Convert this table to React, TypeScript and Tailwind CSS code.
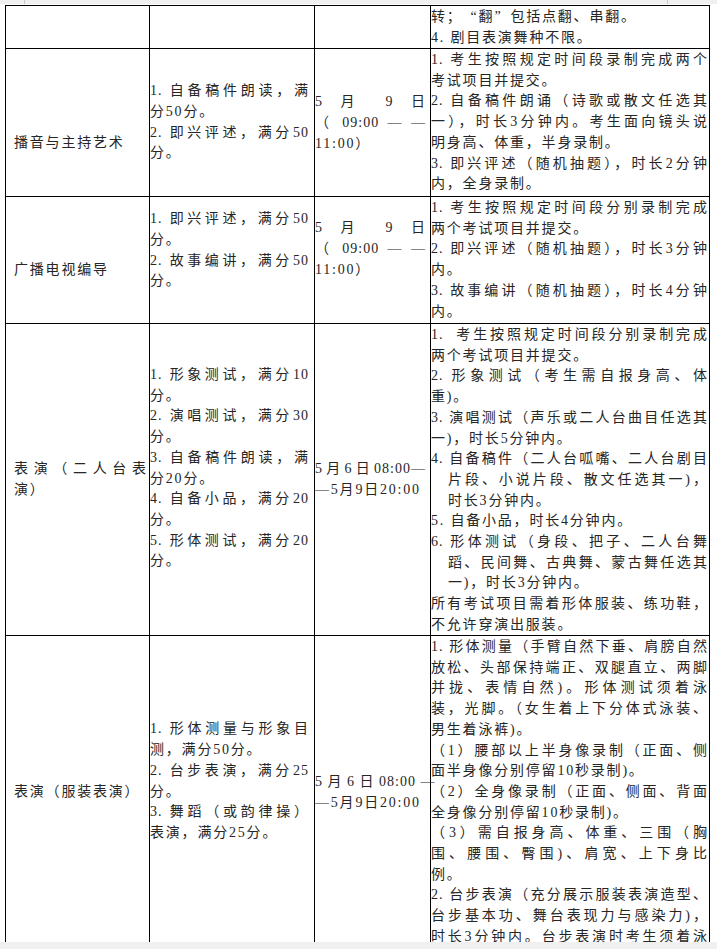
import React from "react";

type Ln = { t: React.ReactNode; j?: boolean; i?: boolean };

const j = (t: React.ReactNode): Ln => ({ t, j: true });
const l = (t: React.ReactNode): Ln => ({ t });
const ji = (t: React.ReactNode): Ln => ({ t, j: true, i: true });
const li = (t: React.ReactNode): Ln => ({ t, i: true });

function Lines({ ls }: { ls: Ln[] }) {
  return (
    <>
      {ls.map((x, k) => (
        <div
          key={k}
          className={
            x.j
              ? x.i
                ? "whitespace-nowrap text-justify [text-align-last:justify] pl-[17px]"
                : "whitespace-nowrap text-justify [text-align-last:justify]"
              : x.i
              ? "whitespace-nowrap pl-[17px] tracking-[1.8px]"
              : "whitespace-nowrap tracking-[1.8px]"
          }
        >
          {x.t}
        </div>
      ))}
    </>
  );
}

function Row({
  h,
  c1,
  c2,
  c3,
  c4,
  p1 = "",
  p2 = "",
  p3 = "",
}: {
  h: string;
  c1: Ln[];
  c2: Ln[];
  c3: Ln[];
  c4: Ln[];
  p1?: string;
  p2?: string;
  p3?: string;
}) {
  return (
    <div className={"flex border-b border-black overflow-hidden " + h}>
      <div className={"w-[144px] shrink-0 border-r border-black pl-[8px] pr-[2px] flex flex-col justify-center " + p1}>
        <Lines ls={c1} />
      </div>
      <div className={"w-[165px] shrink-0 border-r border-black pr-[5px] flex flex-col justify-center " + p2}>
        <Lines ls={c2} />
      </div>
      <div className={"w-[116px] shrink-0 border-r border-black pr-[4px] flex flex-col justify-center " + p3}>
        <Lines ls={c3} />
      </div>
      <div className="w-[279px] shrink-0 border-r border-black pr-px pt-px overflow-hidden">
        <Lines ls={c4} />
      </div>
    </div>
  );
}

export default function App() {
  return (
    <div className="w-[717px] h-[949px] overflow-hidden bg-white flex flex-col font-['Liberation_Serif','Noto_Sans_CJK_SC',serif] text-[14px] leading-[20.7px] tracking-[1px] text-[#262626]">
      <div className="h-[4px] shrink-0 bg-[#f0f0f0] flex justify-between pl-[24px] pr-[49px]">
        <span className="w-px h-full bg-[#c8c8c8]" />
        <span className="w-px h-full bg-[#c8c8c8]" />
      </div>
      <div className="flex-1 overflow-hidden pt-px pl-[5px]">
        <div className="w-[705px] border-l border-t border-black">
          <Row
            h="h-[43px]"
            c1={[]}
            c2={[]}
            c3={[]}
            c4={[
              l(
                <>
                  转；<span className="inline-block w-[16px] text-right">“</span>翻
                  <span className="inline-block w-[16px] text-left">”</span>包括点翻、串翻。
                </>
              ),
              l("4. 剧目表演舞种不限。"),
            ]}
          />
          <Row
            h="h-[148px]"
            p1="pt-[42px]"
            p3="pt-[2px]"
            c1={[l("播音与主持艺术")]}
            c2={[j("1. 自备稿件朗读，满"), l("分50分。"), j("2. 即兴评述，满分50"), l("分。")]}
            c3={[j("5 月 9 日"), j("（ 09:00 — —"), l("11:00）")]}
            c4={[
              j("1. 考生按照规定时间段录制完成两个"),
              l("考试项目并提交。"),
              j("2. 自备稿件朗诵（诗歌或散文任选其"),
              j("一），时长3分钟内。考生面向镜头说"),
              l("明身高、体重，半身录制。"),
              j("3. 即兴评述（随机抽题），时长2分钟"),
              l("内，全身录制。"),
            ]}
          />
          <Row
            h="h-[127px]"
            p1="pt-[21px]"
            p2="pb-[19px]"
            p3="pb-[21px]"
            c1={[l("广播电视编导")]}
            c2={[j("1. 即兴评述，满分50"), l("分。"), j("2. 故事编讲，满分50"), l("分。")]}
            c3={[j("5 月 9 日"), j("（ 09:00 — —"), l("11:00）")]}
            c4={[
              j("1. 考生按照规定时间段分别录制完成"),
              l("两个考试项目并提交。"),
              j("2. 即兴评述（随机抽题），时长3分钟"),
              l("内。"),
              j("3. 故事编讲（随机抽题），时长4分钟"),
              l("内。"),
            ]}
          />
          <Row
            h="h-[312px]"
            p2="pb-[22px]"
            c1={[j("表演（二人台表"), l("演）")]}
            c2={[
              j("1. 形象测试，满分10"),
              l("分。"),
              j("2. 演唱测试，满分30"),
              l("分。"),
              j("3. 自备稿件朗读，满"),
              l("分20分。"),
              j("4. 自备小品，满分20"),
              l("分。"),
              j("5. 形体测试，满分20"),
              l("分。"),
            ]}
            c3={[j("5月6日08:00—"), l("—5月9日20:00")]}
            c4={[
              j("1.\u00a0 考生按照规定时间段分别录制完成"),
              l("两个考试项目并提交。"),
              j("2. 形象测试（考生需自报身高、体"),
              l("重)。"),
              j("3. 演唱测试（声乐或二人台曲目任选其"),
              l("一)，时长5分钟内。"),
              j("4. 自备稿件（二人台呱嘴、二人台剧目"),
              ji("片段、小说片段、散文任选其一)，"),
              li("时长3分钟内。"),
              l("5. 自备小品，时长4分钟内。"),
              j("6. 形体测试（身段、把子、二人台舞"),
              ji("蹈、民间舞、古典舞、蒙古舞任选其"),
              li("一)，时长3分钟内。"),
              j("所有考试项目需着形体服装、练功鞋，"),
              l("不允许穿演出服装。"),
            ]}
          />
          <Row
            h="h-[314px]"
            p2="pb-[22px]"
            c1={[l("表演（服装表演）")]}
            c2={[
              j("1. 形体测量与形象目"),
              l("测，满分50分。"),
              j("2. 台步表演，满分25"),
              l("分。"),
              j("3. 舞蹈（或韵律操）"),
              l("表演，满分25分。"),
            ]}
            c3={[j("5 月 6 日 08:00 —"), l("—5月9日20:00")]}
            c4={[
              j("1. 形体测量（手臂自然下垂、肩膀自然"),
              j("放松、头部保持端正、双腿直立、两脚"),
              j("并拢、表情自然)。形体测试须着泳"),
              j("装，光脚。（女生着上下分体式泳装、"),
              l("男生着泳裤)。"),
              j("（1）腰部以上半身像录制（正面、侧"),
              l("面半身像分别停留10秒录制)。"),
              j("（2）全身像录制（正面、侧面、背面"),
              l("全身像分别停留10秒录制)。"),
              j("（3）需自报身高、体重、三围（胸"),
              j("围、腰围、臀围)、肩宽、上下身比"),
              l("例。"),
              j("2. 台步表演（充分展示服装表演造型、"),
              j("台步基本功、舞台表现力与感染力)，"),
              j("时长3分钟内。台步表演时考生须着泳"),
            ]}
          />
        </div>
      </div>
      <div className="h-[7px] shrink-0 bg-[#f0f0f0]" />
    </div>
  );
}
